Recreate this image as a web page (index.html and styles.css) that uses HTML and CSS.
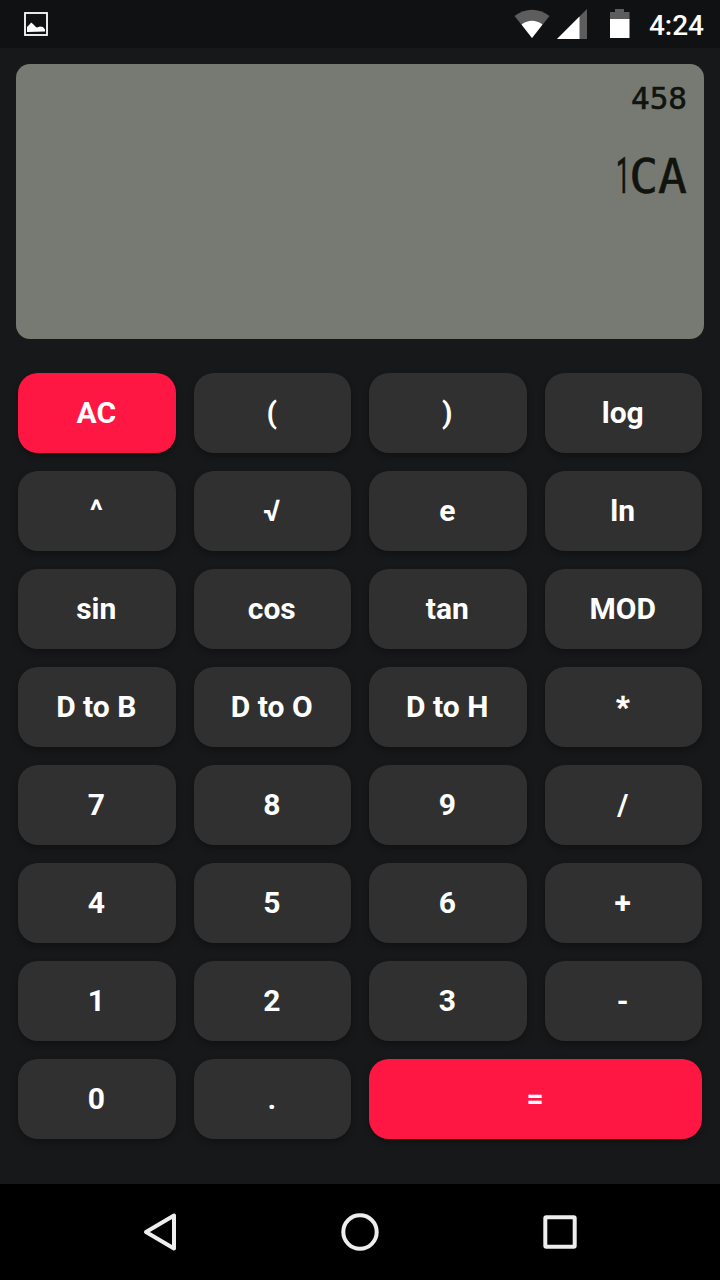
FILE: index.html
```html
<!DOCTYPE html>
<html lang="en">
<head>
<meta charset="utf-8">
<title>Calculator</title>
<link rel="stylesheet" href="styles.css">
</head>
<body>
<header class="status">
  <svg class="picture" width="24" height="24" viewBox="0 0 24 24"><rect x="1" y="1" width="22" height="22" fill="none" stroke="#fff" stroke-width="1.8"/><path d="M3 20v-5l2-2 1-1 1-1.500 2 1.500 3 3 1 .5 3-1 3 .5 2 2.500v2z" fill="#fff"/></svg>
  <div class="indicators">
    <svg class="wifi" width="36" height="30" viewBox="0 0 36 30"><path d="M.5 7Q18-5.500 35.500 7L18 29z" fill="#5d5d5e"/><path d="M7.500 15.500Q18 8 28.500 15.500L18 29z" fill="#fff"/></svg>
    <svg class="signal" width="30" height="30" viewBox="0 0 30 30"><path d="M0 30L30 0v30z" fill="#5d5d5e"/><path d="M0 30L22.500 7.500V30z" fill="#fff"/></svg>
    <svg class="battery" width="20" height="30" viewBox="0 0 20 30"><path d="M0 3h5V0h9v3h5.500v8H0z" fill="#5d5d5e"/><path d="M0 10h19.500v19H0z" fill="#fff"/></svg>
    <span class="clock">4:24</span>
  </div>
</header>
<main class="calculator">
  <section class="display">
    <div class="entry">458</div>
    <div class="result"><span class="narrow">1</span>CA</div>
  </section>
  <section class="keys">
    <button class="key accent">AC</button><button class="key">(</button><button class="key">)</button><button class="key">log</button>
    <button class="key">^</button><button class="key">√</button><button class="key">e</button><button class="key">ln</button>
    <button class="key">sin</button><button class="key">cos</button><button class="key">tan</button><button class="key">MOD</button>
    <button class="key">D to B</button><button class="key">D to O</button><button class="key">D to H</button><button class="key star">*</button>
    <button class="key">7</button><button class="key">8</button><button class="key">9</button><button class="key">/</button>
    <button class="key">4</button><button class="key">5</button><button class="key">6</button><button class="key">+</button>
    <button class="key">1</button><button class="key">2</button><button class="key">3</button><button class="key">-</button>
    <button class="key">0</button><button class="key">.</button><button class="key accent wide">=</button>
  </section>
</main>
<nav class="navbar">
  <svg width="40" height="40" viewBox="0 0 40 40"><path d="M6 20L34 3.500v33z"/></svg>
  <svg width="40" height="40" viewBox="0 0 40 40"><circle cx="20" cy="20" r="16.700"/></svg>
  <svg width="40" height="40" viewBox="0 0 40 40"><rect x="5.300" y="5.300" width="29.400" height="29.400" rx="1"/></svg>
</nav>
</body>
</html>
```
FILE: styles.css
```css
* { box-sizing: border-box; }
body {
  margin: 0;
  width: 720px;
  height: 1280px;
  display: flex;
  flex-direction: column;
  overflow: hidden;
  background: #17181a;
  color: #fff;
  font-family: Roboto, sans-serif;
}
svg { display: block; }
.status {
  height: 48px;
  display: flex;
  justify-content: space-between;
  padding: 0 16px 0 24px;
  background: #101113;
}
.picture { margin-top: 12px; }
.indicators { display: flex; }
.wifi { margin-top: 9px; }
.signal { margin: 9px 0 0 7px; }
.battery { margin: 9px 0 0 23px; }
.clock {
  margin-left: 19px;
  font-size: 28px;
  font-weight: 500;
  line-height: 51px;
}
.calculator { flex: 1; padding: 16px 16px 0; }
.display {
  height: 275px;
  padding: 16px 17px;
  border-radius: 14px;
  background: #777a72;
  color: #10130e;
  text-align: right;
  font-family: "DejaVu Sans Mono", monospace;
  -webkit-text-stroke: .6px #10130e;
}
.entry { font-size: 31px; line-height: 36px; }
.result { margin-top: 32px; font-size: 48px; line-height: 56px; }
.narrow {
  display: inline-block;
  width: 10px;
  margin-right: 3px;
  font-family: Roboto, sans-serif;
  font-size: 50px;
  line-height: 56px;
  transform: scaleX(.5);
  transform-origin: left;
}
.keys {
  display: grid;
  grid-template-columns: repeat(4, 1fr);
  grid-auto-rows: 80px;
  gap: 18px;
  padding: 34px 2px 0;
}
.key {
  border: 0;
  padding: 0 1px 0 0;
  border-radius: 20px;
  background: #303030;
  color: #fff;
  font: bold 30px/80px Roboto, sans-serif;
  box-shadow: 0 3px 6px rgba(0, 0, 0, .3);
}
.star { -webkit-text-stroke: .5px #fff; }
.accent { background: #ff1744; }
.wide { grid-column: span 2; }
.navbar {
  height: 96px;
  display: flex;
  justify-content: center;
  align-items: center;
  gap: 160px;
  background: #000;
}
.navbar svg {
  fill: none;
  stroke: #eee;
  stroke-width: 4;
  stroke-linejoin: round;
}
```
